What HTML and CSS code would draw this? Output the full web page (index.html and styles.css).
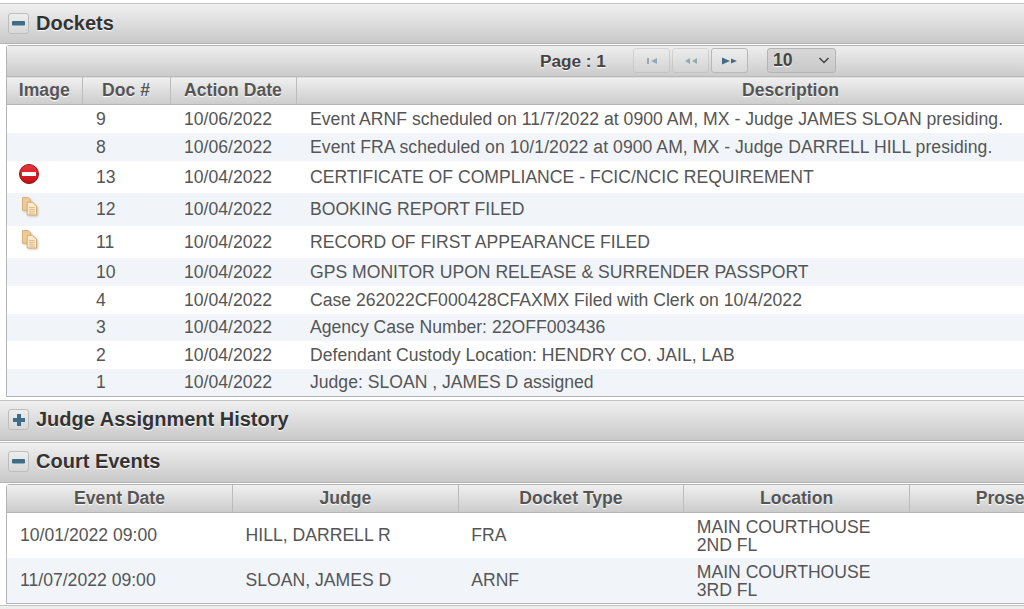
FILE: index.html
```html
<!DOCTYPE html>
<html lang="en">
<head>
<meta charset="utf-8">
<title>Case details</title>
<link rel="stylesheet" href="styles.css">
</head>
<body>
<div class="page">
  <section class="panel">
    <h2 class="bar"><span class="toggle"><svg viewBox="0 0 13 13" width="13" height="13"><rect x="0" y="4" width="13" height="4.500" rx="1" fill="#3f6c86"/></svg></span>Dockets</h2>
    <div class="box">
      <div class="pager">
        <span class="page-label">Page : 1</span>
        <span class="btn off"><svg viewBox="0 0 12 8" width="12" height="8"><path d="M1 1h2v6H1zM11 1v6L5 4z" fill="#3f6c86"/></svg></span>
        <span class="btn off"><svg viewBox="0 0 14 8" width="14" height="8"><path d="M6 1v6L1 4zM13 1v6L8 4z" fill="#3f6c86"/></svg></span>
        <span class="btn"><svg viewBox="0 0 15 8" width="15" height="8"><path d="M0 .5v7l8-3.500zM9 1.500v5L15 4z" fill="#3f6c86"/></svg></span>
        <span class="select">10<svg viewBox="0 0 12 7" width="12" height="7"><path d="M1.500 1 6 5.500 10.500 1" fill="none" stroke="#444" stroke-width="1.500"/></svg></span>
      </div>
      <table class="grid dockets">
        <colgroup><col class="c-img"><col class="c-doc"><col class="c-date"><col class="c-desc"></colgroup>
        <thead><tr><th>Image</th><th>Doc #</th><th>Action Date</th><th>Description</th></tr></thead>
        <tbody>
          <tr class="r28"><td></td><td class="num">9</td><td>10/06/2022</td><td class="wide-a">Event ARNF scheduled on 11/7/2022 at 0900 AM, MX - Judge JAMES SLOAN presiding.</td></tr>
          <tr class="r28 alt"><td></td><td class="num">8</td><td>10/06/2022</td><td class="wide-b">Event FRA scheduled on 10/1/2022 at 0900 AM, MX - Judge DARRELL HILL presiding.</td></tr>
          <tr class="r32"><td class="icon"><svg viewBox="0 0 20 20" width="20" height="20"><defs><linearGradient id="stopfill" x1="0" y1="0" x2="0" y2="1"><stop offset="0" stop-color="#f0353c"/><stop offset="1" stop-color="#c40d14"/></linearGradient></defs><circle cx="10" cy="10" r="9.500" fill="url(#stopfill)" stroke="#8e1116"/><rect x="3" y="8" width="14" height="4" fill="#fff"/></svg></td><td class="num">13</td><td>10/04/2022</td><td>CERTIFICATE OF COMPLIANCE - FCIC/NCIC REQUIREMENT</td></tr>
          <tr class="r33 alt"><td class="icon"><svg class="doc" viewBox="0 0 17 20" width="16" height="19"><path d="M.5.500h6l2.500 2.500v11H.5z" fill="#eccb98" stroke="#d9ab70"/><path d="M5.500 5.500h5.500l4.500 4v9.500h-10z" fill="#f9ebd0" stroke="#d5a468"/><path d="M7.500 11h6M7.500 13h6M7.500 15h6M7.500 17h6" stroke="#dcb57e"/></svg></td><td class="num">12</td><td>10/04/2022</td><td>BOOKING REPORT FILED</td></tr>
          <tr class="r32"><td class="icon"><svg class="doc" viewBox="0 0 17 20" width="16" height="19"><path d="M.5.500h6l2.500 2.500v11H.5z" fill="#eccb98" stroke="#d9ab70"/><path d="M5.500 5.500h5.500l4.500 4v9.500h-10z" fill="#f9ebd0" stroke="#d5a468"/><path d="M7.500 11h6M7.500 13h6M7.500 15h6M7.500 17h6" stroke="#dcb57e"/></svg></td><td class="num">11</td><td>10/04/2022</td><td>RECORD OF FIRST APPEARANCE FILED</td></tr>
          <tr class="r28 alt"><td></td><td class="num">10</td><td>10/04/2022</td><td>GPS MONITOR UPON RELEASE &amp; SURRENDER PASSPORT</td></tr>
          <tr class="r28"><td></td><td class="num">4</td><td>10/04/2022</td><td>Case 262022CF000428CFAXMX Filed with Clerk on 10/4/2022</td></tr>
          <tr class="r27 alt"><td></td><td class="num">3</td><td>10/04/2022</td><td>Agency Case Number: 22OFF003436</td></tr>
          <tr class="r28"><td></td><td class="num">2</td><td>10/04/2022</td><td>Defendant Custody Location: HENDRY CO. JAIL, LAB</td></tr>
          <tr class="r27 alt"><td></td><td class="num">1</td><td>10/04/2022</td><td>Judge: SLOAN , JAMES D assigned</td></tr>
        </tbody>
      </table>
    </div>
  </section>
  <section class="panel">
    <h2 class="bar"><span class="toggle"><svg viewBox="0 0 12 12" width="12" height="12"><path d="M4 0h4v4h4v4H8v4H4V8H0V4h4z" fill="#3f6c86"/></svg></span>Judge Assignment History</h2>
  </section>
  <section class="panel">
    <h2 class="bar"><span class="toggle"><svg viewBox="0 0 13 13" width="13" height="13"><rect x="0" y="4" width="13" height="4.500" rx="1" fill="#3f6c86"/></svg></span>Court Events</h2>
    <div class="box box-events">
      <table class="grid events">
        <colgroup><col class="c-ev"><col class="c-ev"><col class="c-ev"><col class="c-ev"><col class="c-ev"></colgroup>
        <thead><tr><th>Event Date</th><th>Judge</th><th>Docket Type</th><th>Location</th><th>Prosecutor</th></tr></thead>
        <tbody>
          <tr class="r45"><td>10/01/2022 09:00</td><td>HILL, DARRELL R</td><td>FRA</td><td class="loc">MAIN COURTHOUSE<br>2ND FL</td><td></td></tr>
          <tr class="r45 alt"><td>11/07/2022 09:00</td><td>SLOAN, JAMES D</td><td>ARNF</td><td class="loc">MAIN COURTHOUSE<br>3RD FL</td><td></td></tr>
        </tbody>
      </table>
    </div>
  </section>
  <div class="next-bar"></div>
</div>
</body>
</html>
```

FILE: styles.css
```css
* { box-sizing: border-box; }
html, body { margin: 0; padding: 0; height: 100%; overflow: hidden; background: #fff; }
body { font-family: "Liberation Sans", Arial, sans-serif; font-size: 17.600px; color: #555; }
.page { width: 1024px; padding-top: 3px; overflow: hidden; }
.panel { margin-bottom: 1px; }
.bar {
  display: flex; align-items: center; gap: 7px;
  height: 41px; margin: 0; padding: 0 0 1px 8px;
  font-size: 20px; font-weight: bold; color: #333;
  text-shadow: 0 1px 1px #fff;
  border-top: 1px solid #c4c4c4; border-bottom: 1px solid #b4b4b4;
  background: linear-gradient(#f0f0f0, #c9c9c9);
}
.toggle {
  display: flex; align-items: center; justify-content: center;
  width: 21px; height: 21px; border: 1px solid #bdbdbd; border-radius: 3px;
  background: linear-gradient(#eee, #d8d8d8);
}
.box { width: 1300px; margin: 1px 0 3px 6px; border: 1px solid #b4b4b4; border-radius: 3px 3px 0 0; background: #fff; }
.box-events { margin-bottom: 1px; }
.pager {
  display: flex; align-items: center; height: 30px; padding: 0 0 1px 533px;
  background: linear-gradient(#efefef, #cbcbcb);
  font-size: 17.200px; font-weight: bold; color: #444; text-shadow: 0 1px 1px #fff;
}
.page-label { width: 93px; padding-top: 2px; }
.btn {
  display: flex; align-items: center; justify-content: center;
  width: 37px; height: 25px; margin-right: 2px;
  border: 1px solid #b8b8b8; border-radius: 3px;
  background: linear-gradient(#eee, #d8d8d8);
}
.btn.off { opacity: .45; }
.select {
  display: flex; align-items: center; justify-content: space-between;
  width: 69px; height: 25px; margin-left: 17px; padding: 0 5px 0 5px;
  font-size: 17.600px;
  border: 1px solid #b4b4b4; border-radius: 3px;
  background: linear-gradient(#d8d8d8, #c8c8c8);
}
.grid { border-collapse: collapse; table-layout: fixed; }
.dockets { width: 1278px; }
.events { width: 1128px; }
.c-img { width: 75px; }
.c-doc { width: 88px; }
.c-date { width: 126px; }
.c-desc { width: 989px; }
.c-ev { width: 225.600px; }
th {
  height: 28px; padding: 0; text-align: center; font-size: 17.600px; font-weight: bold; color: #555;
  text-shadow: 0 1px 1px #fff;
  border-top: 1px solid #b9b9b9; border-bottom: 1px solid #b4b4b4; border-right: 1px solid #bcbcbc;
  background: linear-gradient(#f0f0f0, #cccccc);
}
.events th { border-top: 0; }
td { padding: 0 0 0 13px; vertical-align: middle; line-height: 18px; white-space: nowrap; }
.dockets td { padding-left: 14px; }
tr.alt td { background: #f1f5fa; }
.dockets .icon { padding: 0 0 5px 12px; line-height: 0; }
.icon .doc { margin-left: 3px; filter: drop-shadow(1px 1px 1px rgba(120, 90, 40, .35)); }
.wide-a { letter-spacing: .025px; }
.wide-b { letter-spacing: .05px; }
.events .loc { padding-top: 2px; }
.next-bar { height: 10px; border-top: 1px solid #c4c4c4; background: linear-gradient(#f0f0f0, #e6e6e6); }
.r27 { height: 27px; }
.r28 { height: 28px; }
.r32 { height: 32px; }
.r33 { height: 33px; }
.r45 { height: 45px; }
```
